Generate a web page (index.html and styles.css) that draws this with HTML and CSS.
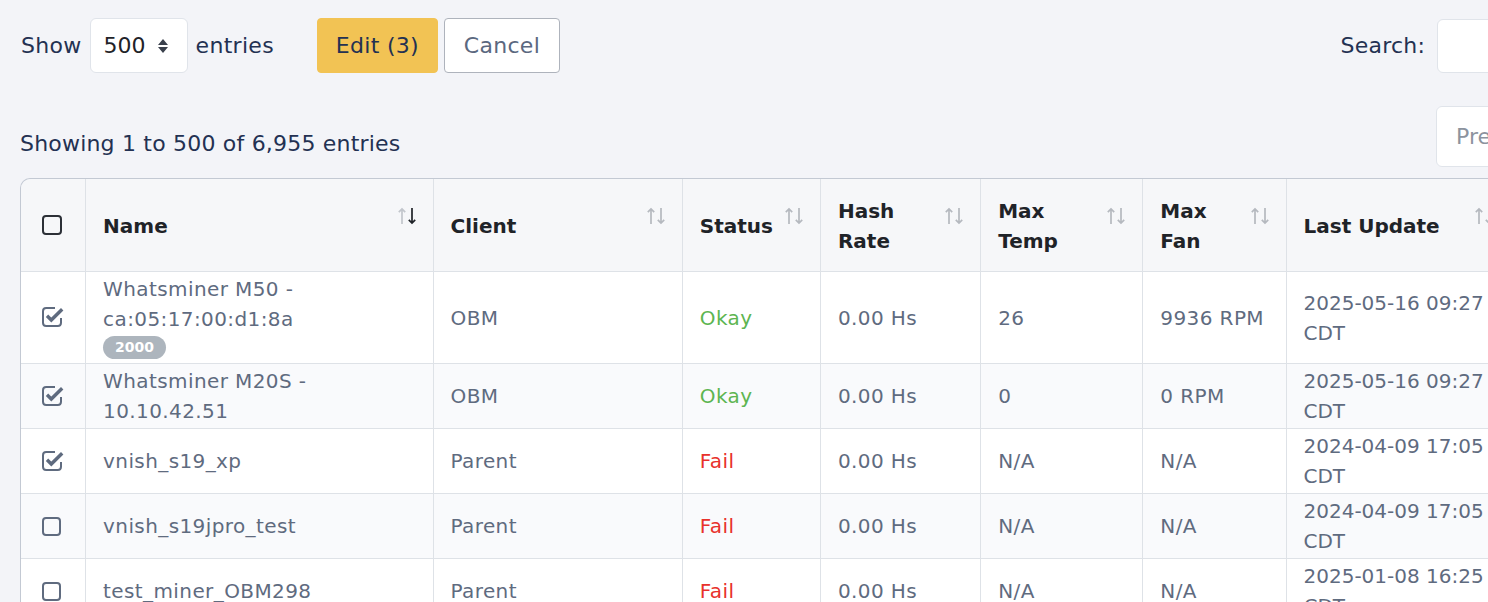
FILE: index.html
```html
<!DOCTYPE html>
<html lang="en">
<head>
<meta charset="utf-8">
<title>Miners</title>
<link rel="stylesheet" href="styles.css">
</head>
<body>
<div class="page">
  <div class="toolbar">
    <div class="toolbar-left">
      <div class="length">
        <span>Show</span>
        <span class="select">500
          <svg class="caret" viewBox="0 0 10 16" width="10" height="16"><path d="M0 7 L5 1 L10 7 Z M0 9 L5 15 L10 9 Z" fill="#3a404c"/></svg>
        </span>
        <span>entries</span>
      </div>
      <div class="actions">
        <button class="btn btn-edit">Edit (3)</button>
        <button class="btn btn-cancel">Cancel</button>
      </div>
    </div>
    <div class="search">
      <span>Search:</span>
      <span class="search-input"></span>
    </div>
  </div>

  <div class="inforow">
    <div class="info">Showing 1 to 500 of 6,955 entries</div>
    <div class="paginate">
      <span class="pg-btn">Previous</span>
      <span class="pg-btn">1</span>
      <span class="pg-btn">2</span>
    </div>
  </div>

  <div class="table-wrap">
    <table class="grid">
      <colgroup>
        <col class="c-check"><col class="c-name"><col class="c-client"><col class="c-status"><col class="c-hash"><col class="c-temp"><col class="c-fan"><col class="c-upd"><col class="c-rest">
      </colgroup>
      <thead>
        <tr>
          <th class="chk"><span class="box"></span></th>
          <th><div class="th-in"><span>Name</span><svg class="sort" viewBox="0 0 20 18" width="20" height="18"><g fill="none" stroke-width="1.7"><path d="M4 17V2 M0.8 5.2 L4 2 L7.2 5.2" stroke="#c2c6cc"/><path d="M14 1v15 M10.8 12.8 L14 16 L17.2 12.8" stroke="#1f2328"/></g></svg></div></th>
          <th><div class="th-in"><span>Client</span><svg class="sort" viewBox="0 0 20 18" width="20" height="18"><g fill="none" stroke-width="1.7" stroke="#b5b9bf"><path d="M4 17V2 M0.8 5.2 L4 2 L7.2 5.2"/><path d="M14 1v15 M10.8 12.8 L14 16 L17.2 12.8"/></g></svg></div></th>
          <th><div class="th-in"><span>Status</span><svg class="sort" viewBox="0 0 20 18" width="20" height="18"><g fill="none" stroke-width="1.7" stroke="#b5b9bf"><path d="M4 17V2 M0.8 5.2 L4 2 L7.2 5.2"/><path d="M14 1v15 M10.8 12.8 L14 16 L17.2 12.8"/></g></svg></div></th>
          <th><div class="th-in"><span>Hash<br>Rate</span><svg class="sort" viewBox="0 0 20 18" width="20" height="18"><g fill="none" stroke-width="1.7" stroke="#b5b9bf"><path d="M4 17V2 M0.8 5.2 L4 2 L7.2 5.2"/><path d="M14 1v15 M10.8 12.8 L14 16 L17.2 12.8"/></g></svg></div></th>
          <th><div class="th-in"><span>Max<br>Temp</span><svg class="sort" viewBox="0 0 20 18" width="20" height="18"><g fill="none" stroke-width="1.7" stroke="#b5b9bf"><path d="M4 17V2 M0.8 5.2 L4 2 L7.2 5.2"/><path d="M14 1v15 M10.8 12.8 L14 16 L17.2 12.8"/></g></svg></div></th>
          <th><div class="th-in"><span>Max<br>Fan</span><svg class="sort" viewBox="0 0 20 18" width="20" height="18"><g fill="none" stroke-width="1.7" stroke="#b5b9bf"><path d="M4 17V2 M0.8 5.2 L4 2 L7.2 5.2"/><path d="M14 1v15 M10.8 12.8 L14 16 L17.2 12.8"/></g></svg></div></th>
          <th><div class="th-in"><span>Last Update</span><svg class="sort" viewBox="0 0 20 18" width="20" height="18"><g fill="none" stroke-width="1.7" stroke="#b5b9bf"><path d="M4 17V2 M0.8 5.2 L4 2 L7.2 5.2"/><path d="M14 1v15 M10.8 12.8 L14 16 L17.2 12.8"/></g></svg></div></th>
          <th class="last"><div class="th-in"><span>Actions</span></div></th>
        </tr>
      </thead>
      <tbody>
        <tr>
          <td class="chk"><svg class="checked" viewBox="0 0 22 22" width="22" height="22"><path d="M13 3H4.2Q1 3 1 6.2V17.8Q1 21 4.2 21H15.8Q19 21 19 17.8V13" fill="none" stroke="#5f6b7f" stroke-width="2"/><path d="M5 10.8L9.3 15L20.2 4.2" fill="none" stroke="#5f6b7f" stroke-width="3.4"/></svg></td>
          <td>Whatsminer M50 -<br>ca:05:17:00:d1:8a<div class="badge-line"><span class="badge">2000</span></div></td>
          <td>OBM</td>
          <td class="ok">Okay</td>
          <td>0.00 Hs</td>
          <td>26</td>
          <td>9936 RPM</td>
          <td class="upd">2025-05-16 09:27<br>CDT</td>
          <td class="last"></td>
        </tr>
        <tr>
          <td class="chk"><svg class="checked" viewBox="0 0 22 22" width="22" height="22"><path d="M13 3H4.2Q1 3 1 6.2V17.8Q1 21 4.2 21H15.8Q19 21 19 17.8V13" fill="none" stroke="#5f6b7f" stroke-width="2"/><path d="M5 10.8L9.3 15L20.2 4.2" fill="none" stroke="#5f6b7f" stroke-width="3.4"/></svg></td>
          <td>Whatsminer M20S -<br>10.10.42.51</td>
          <td>OBM</td>
          <td class="ok">Okay</td>
          <td>0.00 Hs</td>
          <td>0</td>
          <td>0 RPM</td>
          <td class="upd">2025-05-16 09:27<br>CDT</td>
          <td class="last"></td>
        </tr>
        <tr>
          <td class="chk"><svg class="checked" viewBox="0 0 22 22" width="22" height="22"><path d="M13 3H4.2Q1 3 1 6.2V17.8Q1 21 4.2 21H15.8Q19 21 19 17.8V13" fill="none" stroke="#5f6b7f" stroke-width="2"/><path d="M5 10.8L9.3 15L20.2 4.2" fill="none" stroke="#5f6b7f" stroke-width="3.4"/></svg></td>
          <td>vnish_s19_xp</td>
          <td>Parent</td>
          <td class="fail">Fail</td>
          <td>0.00 Hs</td>
          <td>N/A</td>
          <td>N/A</td>
          <td class="upd">2024-04-09 17:05<br>CDT</td>
          <td class="last"></td>
        </tr>
        <tr>
          <td class="chk"><span class="box light"></span></td>
          <td>vnish_s19jpro_test</td>
          <td>Parent</td>
          <td class="fail">Fail</td>
          <td>0.00 Hs</td>
          <td>N/A</td>
          <td>N/A</td>
          <td class="upd">2024-04-09 17:05<br>CDT</td>
          <td class="last"></td>
        </tr>
        <tr>
          <td class="chk"><span class="box light"></span></td>
          <td>test_miner_OBM298</td>
          <td>Parent</td>
          <td class="fail">Fail</td>
          <td>0.00 Hs</td>
          <td>N/A</td>
          <td>N/A</td>
          <td class="upd">2025-01-08 16:25<br>CDT</td>
          <td class="last"></td>
        </tr>
      </tbody>
    </table>
  </div>
</div>
</body>
</html>
```

FILE: styles.css
```css
html, body {
  margin: 0;
  padding: 0;
  overflow: hidden;
  background: #f3f4f8;
}

body {
  font-family: "DejaVu Sans", "Open Sans", sans-serif;
  color: #233152;
}

.page {
  width: 1617px;
  padding: 18px 0 0 20px;
}

/* Toolbar */
.toolbar {
  display: flex;
  justify-content: space-between;
  align-items: center;
  height: 55px;
}

.toolbar-left {
  display: flex;
  align-items: center;
}

.length {
  display: flex;
  align-items: center;
  gap: 8px;
  font-size: 22px;
  line-height: 30px;
  letter-spacing: 0.3px;
  color: #233152;
  padding-left: 1px;
}

.select {
  display: flex;
  align-items: center;
  justify-content: space-between;
  box-sizing: border-box;
  width: 98px;
  height: 55px;
  padding: 0 19px 0 13px;
  background: #fff;
  border: 1px solid #e0e4ea;
  border-radius: 6px;
  color: #1f2328;
  letter-spacing: 0;
}

.caret {
  display: block;
}

.actions {
  display: flex;
  gap: 6px;
  margin-left: 43px;
}

.btn {
  font-family: inherit;
  font-size: 22px;
  letter-spacing: 0.3px;
  height: 55px;
  padding: 0;
  border-radius: 4px;
  cursor: pointer;
  box-sizing: border-box;
}

.btn-edit {
  background: #f2c354;
  border: 1px solid #f2c354;
  color: #233152;
  width: 121px;
}

.btn-cancel {
  background: #fff;
  border: 1px solid #aeb3bc;
  color: #5b6880;
  width: 116px;
}

.search {
  display: flex;
  align-items: center;
  gap: 12px;
  font-size: 22px;
  letter-spacing: 0.2px;
  color: #233152;
}

.search-input {
  display: block;
  box-sizing: border-box;
  width: 200px;
  height: 54px;
  background: #fff;
  border: 1px solid #e0e4ea;
  border-radius: 6px;
}

/* Info row */
.inforow {
  display: flex;
  justify-content: space-between;
  align-items: flex-start;
  margin-top: 33px;
}

.info {
  margin-top: 23px;
  font-size: 22px;
  line-height: 30px;
  letter-spacing: 0.2px;
  color: #233152;
}

.paginate {
  display: flex;
  width: 201px;
  height: 61px;
  overflow: hidden;
}

.pg-btn {
  display: flex;
  align-items: center;
  flex: none;
  box-sizing: border-box;
  height: 61px;
  padding: 0 19px;
  background: #fff;
  border: 1px solid #e0e4ea;
  font-size: 22px;
  color: #8c939e;
}

.pg-btn:first-child {
  border-radius: 6px 0 0 6px;
}

/* Table */
.table-wrap {
  margin-top: 11px;
}

.grid {
  width: 1617px;
  table-layout: fixed;
  border-collapse: separate;
  border-spacing: 0;
  border: 1px solid #c3c9d3;
  border-bottom: 0;
  border-radius: 10px 10px 0 0;
  font-size: 20px;
  line-height: 30px;
}

.c-check { width: 65px; }
.c-name { width: 347px; }
.c-client { width: 249px; }
.c-status { width: 138px; }
.c-hash { width: 160px; }
.c-temp { width: 162px; }
.c-fan { width: 143px; }
.c-upd { width: 224px; }
.c-rest { width: 125px; }

.grid th {
  background: #f6f7f9;
  color: #1f2328;
  font-weight: 700;
  text-align: left;
  vertical-align: middle;
  padding: 17px 15px 15px 17px;
  border-right: 1px solid #dee2e7;
  border-bottom: 1px solid #dee2e7;
  white-space: nowrap;
}

.grid th:first-child {
  border-top-left-radius: 10px;
}

.th-in {
  display: flex;
  justify-content: space-between;
  align-items: center;
}

.sort {
  display: block;
  flex: none;
  margin-bottom: 20px;
}

.grid td {
  padding: 2px 17px;
  color: #5f6b7f;
  letter-spacing: 0.4px;
  vertical-align: middle;
  border-right: 1px solid #dee2e7;
  border-bottom: 1px solid #dee2e7;
  white-space: nowrap;
  background: #fff;
}

.grid td.upd {
  letter-spacing: 0;
}

.grid tbody tr:nth-child(even) td {
  background: #f9fafc;
}

.grid th.last,
.grid td.last {
  border-right: 0;
}

.grid .chk {
  padding: 0 0 0 21px;
}

.box {
  display: block;
  box-sizing: border-box;
  width: 20px;
  height: 20px;
  border: 2px solid #2c3037;
  border-radius: 4px;
}

.box.light {
  border-color: #5f6b7f;
  width: 19px;
  height: 19px;
}

.checked {
  display: block;
  margin-top: -3px;
}

.badge-line {
  display: flex;
  align-items: center;
  height: 27px;
}

.badge {
  display: inline-block;
  height: 23px;
  line-height: 23px;
  padding: 0 12px;
  border-radius: 12px;
  background: #adb5bd;
  color: #fff;
  font-size: 14px;
  font-weight: 700;
  letter-spacing: 0;
}

.ok {
  color: #5db551 !important;
}

.fail {
  color: #e8312b !important;
}
```
